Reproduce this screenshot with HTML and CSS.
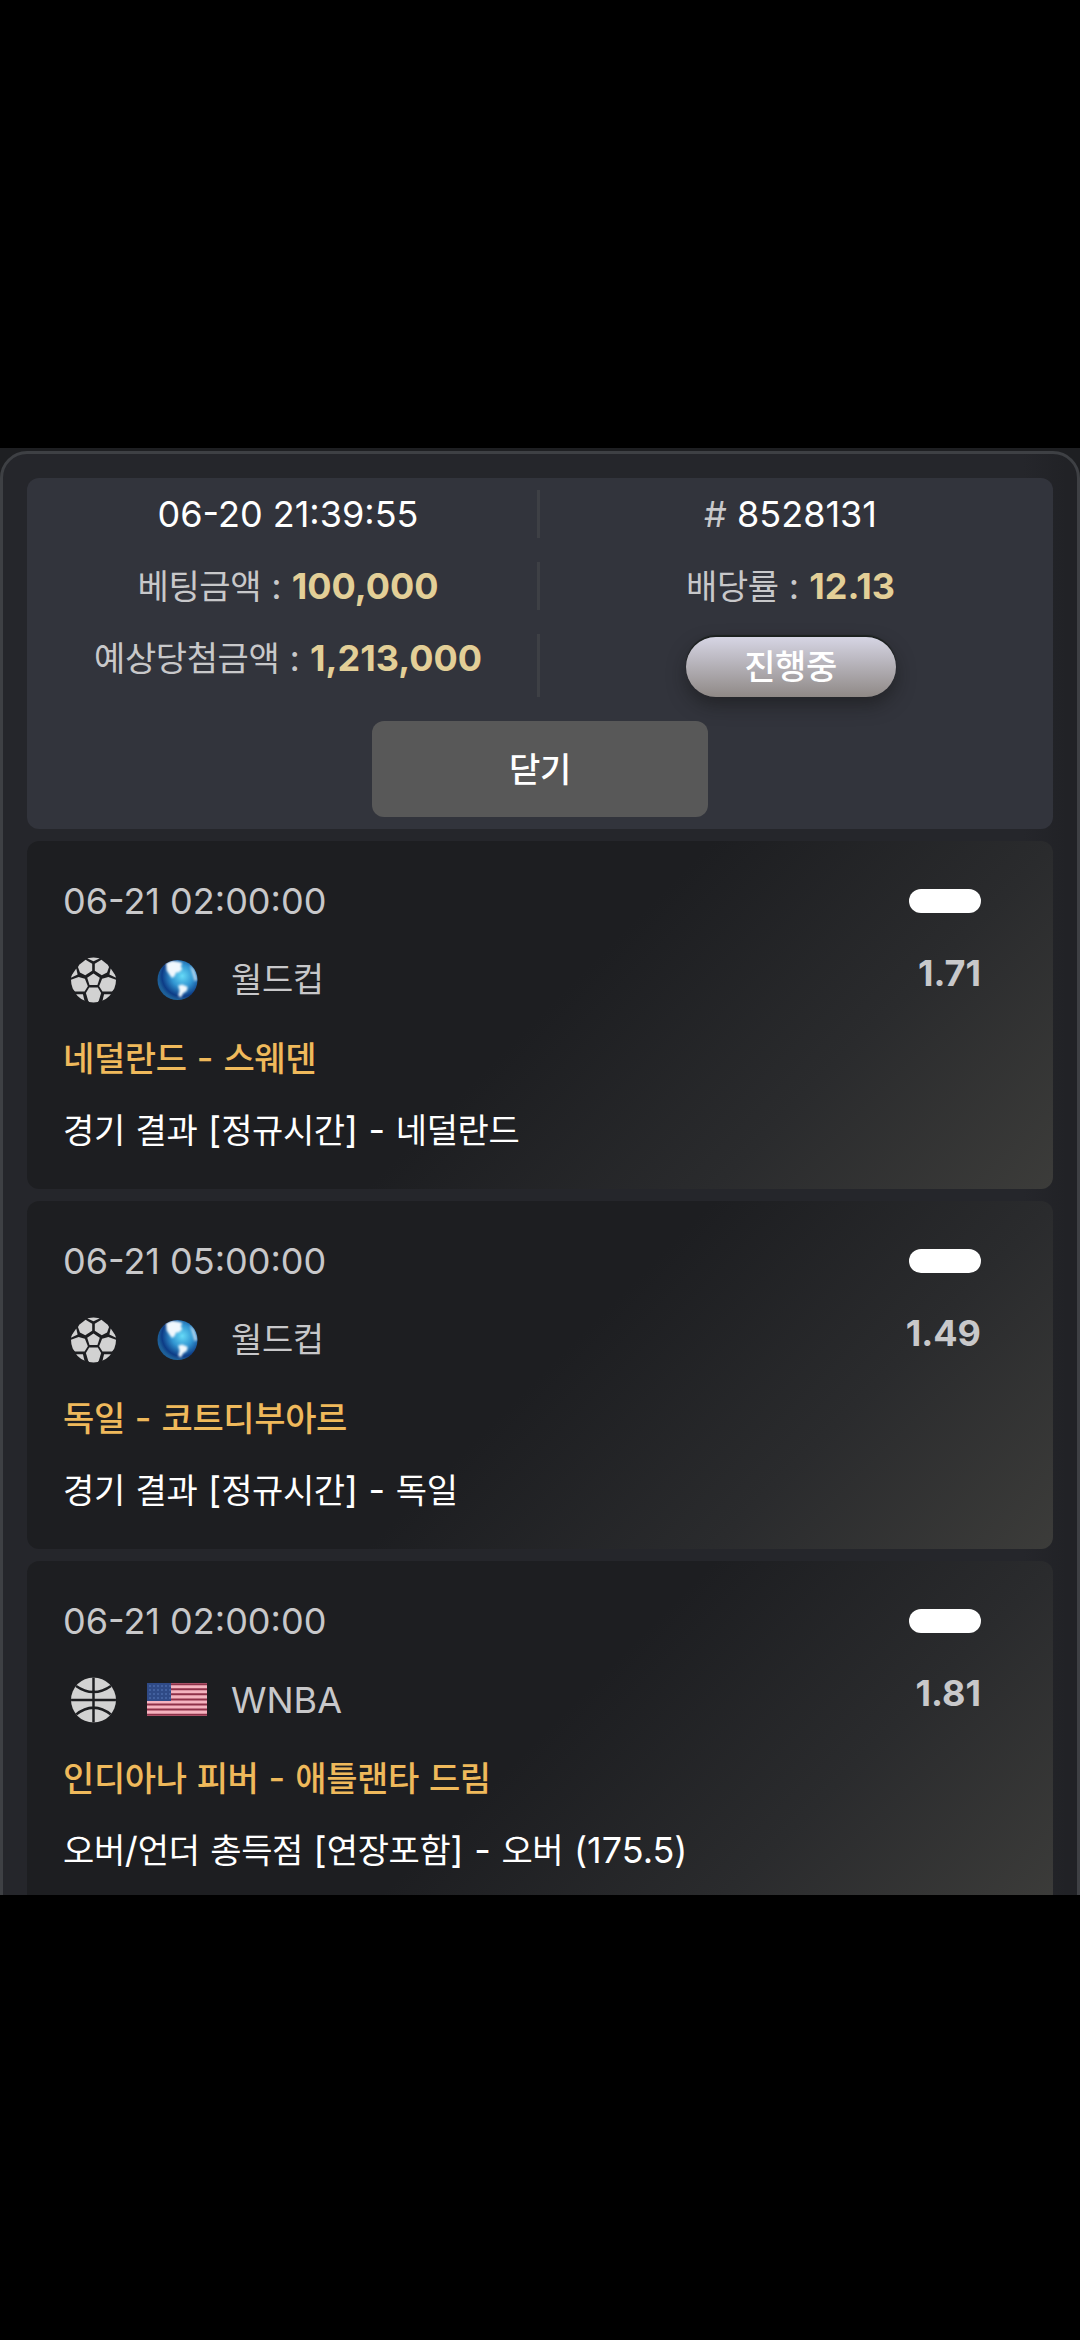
FILE: index.html
```html
<!DOCTYPE html>
<html lang="ko">
<head>
<meta charset="utf-8">
<title>베팅내역</title>
<link rel="stylesheet" href="styles.css">
</head>
<body>
<svg class="defs" aria-hidden="true">
  <defs>
    <radialGradient id="sea" cx="0.62" cy="0.4" r="0.6">
      <stop offset="0" stop-color="#66daf7"/>
      <stop offset="0.45" stop-color="#3296d2"/>
      <stop offset="0.85" stop-color="#0d3c86"/>
      <stop offset="1" stop-color="#1d5f98"/>
    </radialGradient>
    <filter id="soft"><feGaussianBlur stdDeviation="2.6"/></filter>
    <clipPath id="ball"><circle cx="68" cy="69" r="68"/></clipPath>
    <clipPath id="disc"><circle cx="60" cy="62" r="59"/></clipPath>
    <symbol id="soccer" viewBox="0 0 136 138">
      <g clip-path="url(#ball)" fill="#d2d2d2">
        <path d="M68 49 87 62 80 84H56L49 62Z"/>
        <path d="M25 23 44 8 64 20V41L43 55 27 46 21 30Z"/>
        <path d="M111 23 92 8 72 20V41L93 55 109 46 115 30Z"/>
        <path d="M-4 70 23 60 42 65 51 88 41 104 12 104-2 90Z"/>
        <path d="M140 70 113 60 94 65 85 88 95 104 124 104 138 90Z"/>
        <path d="M55 92H81L91 108 84 132 78 140H58L52 132 45 108Z"/>
        <path d="M50-4H86V4L68 12 50 4Z"/>
        <path d="M-4 64 16 34 20 52Z"/>
        <path d="M140 64 120 34 116 52Z"/>
        <path d="M14 112H36L42 136 20 130Z"/>
        <path d="M122 112H100L94 136 116 130Z"/>
      </g>
    </symbol>
    <symbol id="basket" viewBox="0 0 136 138">
      <g clip-path="url(#ball)">
        <rect width="136" height="138" fill="#d2d2d2"/>
        <path d="M68-4V142M-4 69H140M14 26Q68 64 122 26M14 114Q68 70 122 114" fill="none" stroke="#1d1e21" stroke-width="7.5"/>
      </g>
    </symbol>
    <symbol id="globe" viewBox="0 0 120 124">
      <circle cx="60" cy="62" r="59" fill="url(#sea)"/>
      <g clip-path="url(#disc)"><g filter="url(#soft)" fill="#f0f8fd">
        <path d="M26 12 44 5 62 8 74 12 70 22 74 30 64 40 56 40 52 50 44 56 36 46 28 34Z"/>
        <path d="M62 78 74 75 90 82 88 94 76 102 70 114 62 108 66 94Z"/>
        <path d="M96 18 110 32 120 62 110 66 104 44Z" opacity=".65"/>
      </g></g>
    </symbol>
    <symbol id="usa" viewBox="0 0 60 33" preserveAspectRatio="none">
      <rect width="60" height="33" fill="#f5b3bf"/>
      <path d="M0 1.2H60M0 6.3H60M0 11.3H60M0 16.4H60M0 21.5H60M0 26.6H60M0 31.7H60" stroke="#8e3149" stroke-width="2"/>
      <rect width="24" height="18" fill="#2f4a86"/>
      <path d="M2 3H24M2 7H24M2 11H24M2 15H24" stroke="#4a68a6" stroke-width="1.5" stroke-dasharray="2 2"/>
    </symbol>
  </defs>
</svg>
<main class="viewport">
  <div class="panel">
    <section class="summary">
      <div class="row">
        <div class="cell"><span class="strong">06-20 21:39:55</span></div>
        <div class="cell"># <span class="strong">8528131</span></div>
      </div>
      <div class="row">
        <div class="cell"><span class="ko">베팅금액</span> : <b>100,000</b></div>
        <div class="cell"><span class="ko">배당률</span> : <b>12.13</b></div>
      </div>
      <div class="row">
        <div class="cell"><span class="ko">예상당첨금액</span> : <b>1,213,000</b></div>
        <div class="cell"><span class="status ko">진행중</span></div>
      </div>
      <button class="close ko">닫기</button>
    </section>

    <article class="bet">
      <div class="info">
        <div class="line">06-21 02:00:00</div>
        <div class="league"><span class="icon"><svg class="sport"><use href="#soccer"/></svg></span><span class="icon"><svg class="world"><use href="#globe"/></svg></span><span class="ko">월드컵</span></div>
        <div class="line match"><span class="ko">네덜란드</span> - <span class="ko">스웨덴</span></div>
        <div class="line pick"><span class="ko">경기</span> <span class="ko">결과</span> [<span class="ko">정규시간</span>] - <span class="ko">네덜란드</span></div>
      </div>
      <div class="result"><div class="line"><i class="badge"></i></div><div class="line odds">1.71</div></div>
    </article>

    <article class="bet">
      <div class="info">
        <div class="line">06-21 05:00:00</div>
        <div class="league"><span class="icon"><svg class="sport"><use href="#soccer"/></svg></span><span class="icon"><svg class="world"><use href="#globe"/></svg></span><span class="ko">월드컵</span></div>
        <div class="line match"><span class="ko">독일</span> - <span class="ko">코트디부아르</span></div>
        <div class="line pick"><span class="ko">경기</span> <span class="ko">결과</span> [<span class="ko">정규시간</span>] - <span class="ko">독일</span></div>
      </div>
      <div class="result"><div class="line"><i class="badge"></i></div><div class="line odds">1.49</div></div>
    </article>

    <article class="bet">
      <div class="info">
        <div class="line">06-21 02:00:00</div>
        <div class="league"><span class="icon"><svg class="sport"><use href="#basket"/></svg></span><span class="icon"><svg class="flag"><use href="#usa"/></svg></span><span>WNBA</span></div>
        <div class="line match"><span class="ko">인디아나</span> <span class="ko">피버</span> - <span class="ko">애틀랜타</span> <span class="ko">드림</span></div>
        <div class="line pick"><span class="ko">오버</span>/<span class="ko">언더</span> <span class="ko">총득점</span> [<span class="ko">연장포함</span>] - <span class="ko">오버</span> (175.5)</div>
      </div>
      <div class="result"><div class="line"><i class="badge"></i></div><div class="line odds">1.81</div></div>
    </article>
  </div>
</main>
</body>
</html>
```
FILE: styles.css
```css
* { box-sizing: border-box; }
body {
  margin: 0;
  padding-top: 448px;
  height: 2340px;
  overflow: hidden;
  background: #000;
  color: #c8c8ca;
  font: 400 36px/48px Inter, "Noto Sans CJK KR", sans-serif;
}
.defs { display: block; width: 0; height: 0; }
.viewport {
  height: 1447px;
  padding-top: 3px;
  overflow: hidden;
  background: #1e1f22;
}
.panel {
  display: flex;
  flex-direction: column;
  gap: 12px;
  height: 1600px;
  padding: 24px;
  border: 3px solid #3e4044;
  border-radius: 27px;
  background: linear-gradient(90deg, #25262b 95%, #212226 99%);
}
.ko { font-size: 34px; letter-spacing: -0.4px; }
.summary {
  display: flex;
  flex-direction: column;
  gap: 24px;
  height: 351px;
  flex: none;
  padding: 12px;
  border-radius: 12px;
  background: #32343c;
}
.row { display: grid; grid-template-columns: 501px 1fr; }
.cell { height: 48px; text-align: center; white-space: nowrap; }
.row:nth-child(3) .cell { height: 63px; }
.cell:first-child { border-right: 3px solid #3e4045; }
.strong { color: #fff; }
b { color: #e3cf97; font-weight: 700; }
.status {
  display: block;
  width: 210px;
  height: 60px;
  margin: 3px auto 0;
  border-radius: 30px;
  line-height: 60px;
  font-weight: 500;
  color: #fff;
  background: linear-gradient(#d6d5e4, #8f8986);
  box-shadow: 0 -2px 1px rgba(20, 25, 20, .7), 0 8px 18px rgba(20, 20, 20, .5);
}
.close {
  align-self: center;
  width: 336px;
  height: 96px;
  padding: 0 0 3px;
  border: 0;
  border-radius: 12px;
  background: #585858;
  color: #fff;
  font-family: inherit;
  font-weight: 500;
}
.bet {
  display: flex;
  justify-content: space-between;
  flex: none;
  height: 348px;
  padding: 36px 72px 0 36px;
  border-radius: 12px;
  background: linear-gradient(135deg, #1d1e21 50%, #2a2b2d 75%, #3c3c3a);
}
.info, .result { display: flex; flex-direction: column; gap: 24px; white-space: nowrap; }
.line { height: 48px; }
.league { display: flex; align-items: center; gap: 24px; height: 61px; }
.icon { display: flex; justify-content: center; width: 60px; }
.sport { width: 45px; height: 46px; }
.world { width: 41px; height: 42px; }
.flag { width: 60px; height: 33px; }
.match { color: #efb95b; font-weight: 500; word-spacing: 0.5px; }
.pick { color: #fff; word-spacing: 0.6px; }
.result { align-items: flex-end; }
.result .line { display: flex; align-items: center; }
.badge { width: 72px; height: 24px; border-radius: 12px; background: #fff; }
.odds { font-weight: 700; }
```
